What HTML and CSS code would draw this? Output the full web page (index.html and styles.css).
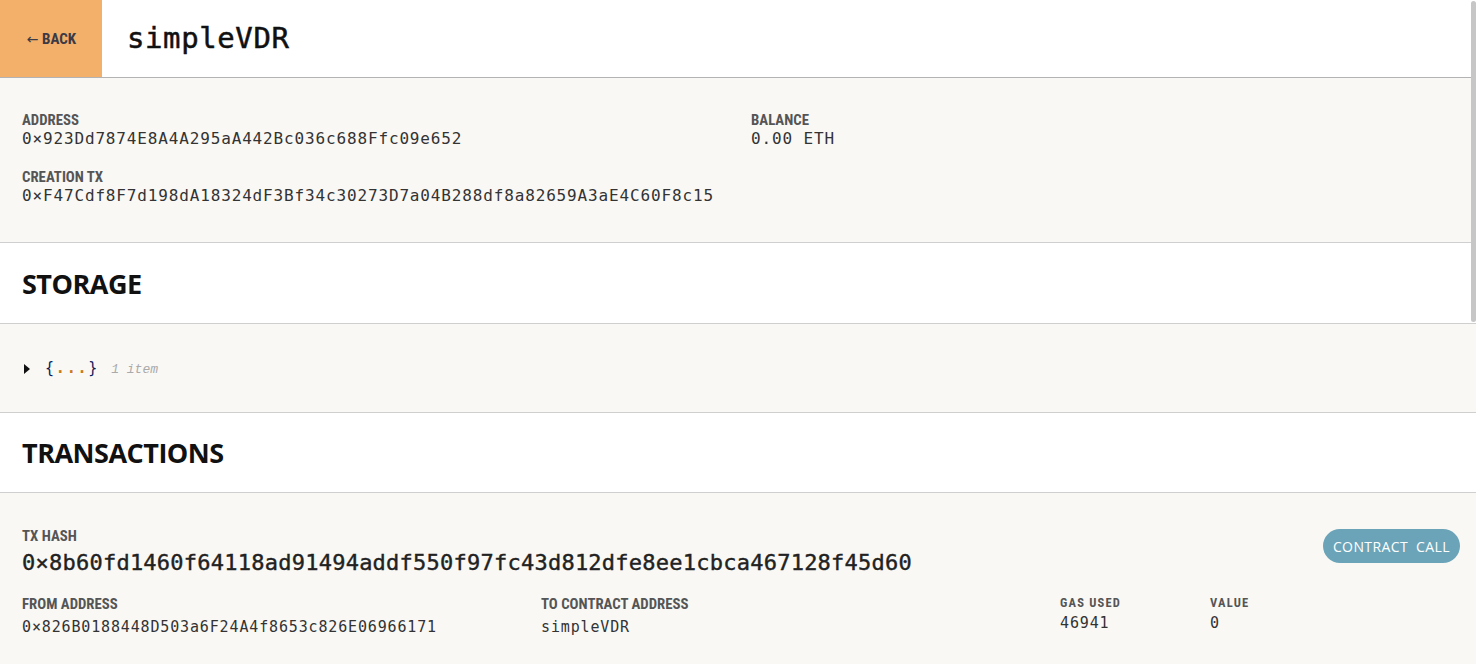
FILE: index.html
```html
<!DOCTYPE html>
<html>
<head>
<meta charset="utf-8">
<title>simpleVDR</title>
<link rel="stylesheet" href="styles.css">
</head>
<body>
<div class="app">
  <header class="topbar">
    <button class="back"><span class="arrow">←</span> BACK</button>
    <h1 class="title">simpleVDR</h1>
  </header>

  <section class="details">
    <div class="col">
      <div class="field">
        <div class="label">ADDRESS</div>
        <div class="value">0×923Dd7874E8A4A295aA442Bc036c688Ffc09e652</div>
      </div>
      <div class="field">
        <div class="label">CREATION TX</div>
        <div class="value">0×F47Cdf8F7d198dA18324dF3Bf34c30273D7a04B288df8a82659A3aE4C60F8c15</div>
      </div>
    </div>
    <div class="col">
      <div class="field">
        <div class="label">BALANCE</div>
        <div class="value">0.00 ETH</div>
      </div>
    </div>
  </section>

  <section class="heading"><h2>STORAGE</h2></section>

  <section class="storage">
    <span class="caret"></span>
    <span class="json"><span class="brace">{</span><span class="dots">...</span><span class="brace">}</span></span>
    <span class="count">1 item</span>
  </section>

  <section class="heading short"><h2>TRANSACTIONS</h2></section>

  <section class="tx">
    <div class="tx-top">
      <div class="tx-hash">
        <div class="label">TX HASH</div>
        <div class="hash">0×8b60fd1460f64118ad91494addf550f97fc43d812dfe8ee1cbca467128f45d60</div>
      </div>
      <span class="badge">CONTRACT CALL</span>
    </div>
    <div class="tx-row">
      <div class="cell wide">
        <div class="label">FROM ADDRESS</div>
        <div class="value small">0×826B0188448D503a6F24A4f8653c826E06966171</div>
      </div>
      <div class="cell wide">
        <div class="label">TO CONTRACT ADDRESS</div>
        <div class="value small">simpleVDR</div>
      </div>
      <div class="cell narrow compact">
        <div class="label tiny">GAS USED</div>
        <div class="value small">46941</div>
      </div>
      <div class="cell compact">
        <div class="label tiny">VALUE</div>
        <div class="value small">0</div>
      </div>
    </div>
  </section>
</div>
<div class="scroll-thumb"></div>
</body>
</html>
```

FILE: styles.css
```css
* { box-sizing: border-box; }

html, body {
  margin: 0;
  padding: 0;
  height: 100%;
  overflow: hidden;
  background: #f9f8f5;
}

body {
  font-family: "Liberation Sans Narrow", "Roboto Condensed", Roboto, sans-serif;
  color: #333;
}

.app {
  width: 1476px;
}

.topbar {
  display: flex;
  align-items: stretch;
  height: 78px;
  background: #ffffff;
  border-bottom: 1px solid #b3b3b3;
}

.back {
  width: 102px;
  border: 0;
  margin: 0;
  padding: 0 0 0 1px;
  background: #f2b06a;
  color: #3c3a46;
  font-family: "Liberation Sans Narrow", "Roboto Condensed", Roboto, sans-serif;
  font-weight: 700;
  font-size: 15px;
}

.back .arrow {
  font-family: "DejaVu Sans", sans-serif;
  font-weight: normal;
  font-size: 14px;
}

.title {
  margin: 0 0 0 25px;
  align-self: center;
  font-family: "DejaVu Sans Mono", monospace;
  font-weight: normal;
  font-size: 29px;
  letter-spacing: 0.6px;
  color: #111;
  -webkit-text-stroke: 0.5px #111;
  padding-bottom: 1px;
}

.details {
  display: grid;
  grid-template-columns: 729px 1fr;
  padding: 34px 22px 36px;
  border-bottom: 1px solid #cfcfcf;
}

.field + .field {
  margin-top: 20px;
}

.label {
  font-family: "Liberation Sans Narrow", "Roboto Condensed", Roboto, sans-serif;
  font-weight: 700;
  font-size: 14.8px;
  line-height: 16px;
  color: #555;
}

.label.tiny {
  font-size: 12.5px;
  letter-spacing: 1.2px;
}

.value {
  font-family: "DejaVu Sans Mono", monospace;
  font-size: 16px;
  letter-spacing: 0.85px;
  line-height: 20px;
  color: #333;
  margin-top: 1px;
}

.value.small {
  font-size: 15px;
  letter-spacing: 0.85px;
}

.heading {
  display: flex;
  align-items: center;
  height: 81px;
  padding: 0 22px;
  background: #ffffff;
  border-bottom: 1px solid #cfcfcf;
}

.heading.short {
  height: 80px;
}

.heading h2 {
  margin: 0;
  font-family: "Open Sans", "Noto Sans", sans-serif;
  font-weight: 700;
  font-size: 27px;
  color: #111;
  letter-spacing: -0.5px;
}

.storage {
  display: flex;
  align-items: center;
  height: 89px;
  padding: 0 24px;
  border-bottom: 1px solid #cfcfcf;
}

.caret {
  width: 0;
  height: 0;
  border-top: 5.5px solid transparent;
  border-bottom: 5.5px solid transparent;
  border-left: 6px solid #111;
  margin-right: 15px;
  margin-top: 1px;
}

.json {
  font-family: "DejaVu Sans Mono", monospace;
  font-size: 15px;
  letter-spacing: 1.8px;
}

.brace {
  color: #0b1a5a;
}

.dots {
  color: #cb7a16;
  font-weight: bold;
}

.count {
  margin-left: 12px;
  font-family: "Liberation Mono", monospace;
  font-style: italic;
  font-size: 13px;
  color: #aaa;
  margin-top: 2px;
}

.tx {
  padding: 35px 16px 30px 22px;
}

.tx-top {
  display: flex;
  justify-content: space-between;
  align-items: flex-start;
}

.hash {
  font-family: "DejaVu Sans Mono", monospace;
  font-size: 22px;
  line-height: 30px;
  letter-spacing: 0.24px;
  color: #222;
  -webkit-text-stroke: 0.4px #222;
  margin-top: 4px;
}

.badge {
  margin-top: 1px;
  height: 34px;
  padding: 0 10px 0 10px;
  display: inline-flex;
  align-items: center;
  border-radius: 17px;
  background: #6ba4b9;
  color: #ffffff;
  font-family: "Open Sans", "Noto Sans", sans-serif;
  font-size: 14px;
  letter-spacing: 0.4px;
  word-spacing: 4px;
}

.tx-row {
  display: flex;
  margin-top: 18px;
}

.cell.wide { width: 519px; }
.cell.narrow { width: 150px; }
.cell .value { margin-top: 5px; }
.cell.compact { margin-top: -1px; }
.cell.compact .value { margin-top: 2px; }

.scroll-thumb {
  position: fixed;
  top: 1px;
  right: 0;
  width: 5px;
  height: 321px;
  border-radius: 3px;
  background: #c6c6c6;
}
```
